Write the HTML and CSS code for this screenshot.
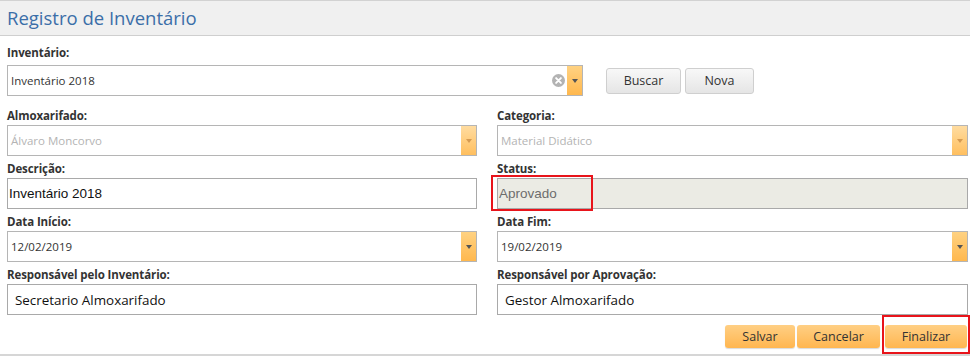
FILE: index.html
```html
<!DOCTYPE html>
<html lang="pt">
<head>
<meta charset="utf-8">
<title>Registro de Inventário</title>
<link rel="stylesheet" href="styles.css">
</head>
<body>
<div class="page">
  <div class="header"><h1 class="title">Registro de Inventário</h1></div>
  <div class="content">
    <div class="label top-label">Inventário:</div>
    <div class="search-row">
      <div class="combo combo-main">
        <span class="combo-text">Inventário 2018</span>
        <span class="clear-icon"><svg width="13" height="13" viewBox="0 0 12 12"><circle cx="6" cy="6" r="6" fill="#b3b3b3"/><path d="M3.8 3.8 L8.2 8.2 M8.2 3.8 L3.8 8.2" stroke="#fff" stroke-width="1.8" stroke-linecap="round"/></svg></span>
        <span class="combo-btn"><span class="arrow"></span></span>
      </div>
      <div class="gray-buttons">
        <button class="btn-gray btn-buscar">Buscar</button>
        <button class="btn-gray btn-nova">Nova</button>
      </div>
    </div>

    <div class="grid">
      <div class="field">
        <div class="label">Almoxarifado:</div>
        <div class="combo disabled"><span class="combo-text">Álvaro Moncorvo</span><span class="combo-btn"><span class="arrow"></span></span></div>
      </div>
      <div class="field">
        <div class="label">Categoria:</div>
        <div class="combo disabled"><span class="combo-text">Material Didático</span><span class="combo-btn"><span class="arrow"></span></span></div>
      </div>

      <div class="field">
        <div class="label">Descrição:</div>
        <div class="input arial">Inventário 2018</div>
      </div>
      <div class="field">
        <div class="label">Status:</div>
        <div class="input arial readonly"><span class="status-text">Aprovado</span><span class="highlight status-highlight"></span></div>
      </div>

      <div class="field">
        <div class="label">Data Início:</div>
        <div class="combo"><span class="combo-text">12/02/2019</span><span class="combo-btn"><span class="arrow"></span></span></div>
      </div>
      <div class="field">
        <div class="label">Data Fim:</div>
        <div class="combo"><span class="combo-text">19/02/2019</span><span class="combo-btn"><span class="arrow"></span></span></div>
      </div>

      <div class="field">
        <div class="label">Responsável pelo Inventário:</div>
        <div class="input sans">Secretario Almoxarifado</div>
      </div>
      <div class="field">
        <div class="label">Responsável por Aprovação:</div>
        <div class="input sans">Gestor Almoxarifado</div>
      </div>
    </div>

    <div class="actions">
      <button class="btn-orange btn-salvar">Salvar</button>
      <button class="btn-orange btn-cancelar">Cancelar</button>
      <span class="final-wrap"><button class="btn-orange btn-finalizar">Finalizar</button><span class="highlight final-highlight"></span></span>
    </div>
  </div>
</div>
</body>
</html>
```

FILE: styles.css
```css
* { box-sizing: border-box; }
html, body { margin: 0; padding: 0; background: #fff; }
body { font-family: "Open Sans", "Noto Sans", sans-serif; color: #333; width: 970px; height: 356px; overflow: hidden; }

.page { height: 356px; border-bottom: 2px solid #d6d6d6; }

.header {
  height: 36px;
  background: #f0f0f0;
  border-top: 1px solid #d2d2d2;
  border-bottom: 1px solid #cfcfcf;
  padding-left: 7px;
}
.title {
  margin: 0;
  font-weight: 400;
  font-size: 18.5px;
  line-height: 33px;
  color: #3b6ea8;
}

.content { padding: 9px 2px 0 7px; }

.label {
  font-size: 11.5px;
  font-weight: 700;
  line-height: 16px;
  color: #333;
  height: 16px;
  margin-bottom: 1px;
  letter-spacing: -0.1px;
}
.top-label { margin-bottom: 4px; }

.search-row { display: flex; align-items: center; }
.combo-main { width: 576px; }
.gray-buttons { display: flex; gap: 4px; margin-left: 23px; }

.combo {
  position: relative;
  display: flex;
  align-items: center;
  height: 31px;
  border: 1px solid #b5b5b5;
  background: #fff;
}
.combo-text {
  flex: 1;
  font-size: 11.5px;
  padding-left: 3px;
  color: #333;
}
.combo.disabled .combo-text { color: #b4b4b4; }
.combo-btn {
  width: 15px;
  align-self: stretch;
  background: linear-gradient(#ffd282, #ffb84e);
  display: flex;
  align-items: center;
  justify-content: center;
}
.combo.disabled .combo-btn { background: linear-gradient(#ffdca0, #ffbf5f); }
.arrow {
  width: 0; height: 0;
  border-left: 3.5px solid transparent;
  border-right: 3.5px solid transparent;
  border-top: 4px solid #555;
}
.combo.disabled .arrow { border-top-color: #d69b52; }
.clear-icon { display: flex; margin-right: 2px; }

.btn-gray {
  height: 26px;
  border: 1px solid #cfcfcf;
  border-radius: 3px;
  background: linear-gradient(#f8f8f8, #e5e5e5);
  font-family: "Open Sans", sans-serif;
  font-size: 12.5px;
  color: #333;
  padding: 0;
}
.btn-buscar { width: 75px; }
.btn-nova { width: 69px; }

.grid {
  display: grid;
  grid-template-columns: 470px 471px;
  column-gap: 20px;
  row-gap: 5px;
  margin-top: 12px;
}

.input {
  position: relative;
  height: 31px;
  border: 1px solid #a9a9a9;
  background: #fff;
  display: flex;
  align-items: center;
  color: #111;
}
.arial { font-family: "Liberation Sans", Arial, sans-serif; font-size: 13.5px; padding-left: 1px; }
.readonly { background: #ebebe4; color: #6d6d6d; }
.sans { font-family: "Open Sans", sans-serif; font-size: 13.4px; padding-left: 7px; color: #111; }

.highlight { position: absolute; border: 2px solid #e8141b; pointer-events: none; }
.status-highlight { left: -7px; top: -4px; width: 102px; height: 36px; }

.actions {
  display: flex;
  justify-content: flex-end;
  align-items: center;
  margin-top: 10px;
  gap: 2px;
}
.btn-orange {
  height: 23px;
  border: none;
  border-radius: 3px;
  background: linear-gradient(#ffcf84, #ffb650);
  font-family: "Open Sans", sans-serif;
  font-size: 12.5px;
  color: #333;
  padding: 0;
  box-shadow: 0 1px 1px rgba(0,0,0,0.15);
}
.btn-salvar { width: 70px; }
.btn-cancelar { width: 83px; }
.btn-finalizar { width: 82px; }
.final-wrap { position: relative; display: flex; margin-left: 3px; margin-right: 1px; }
.final-highlight { left: -3px; top: -10px; width: 88px; height: 39px; }
```
